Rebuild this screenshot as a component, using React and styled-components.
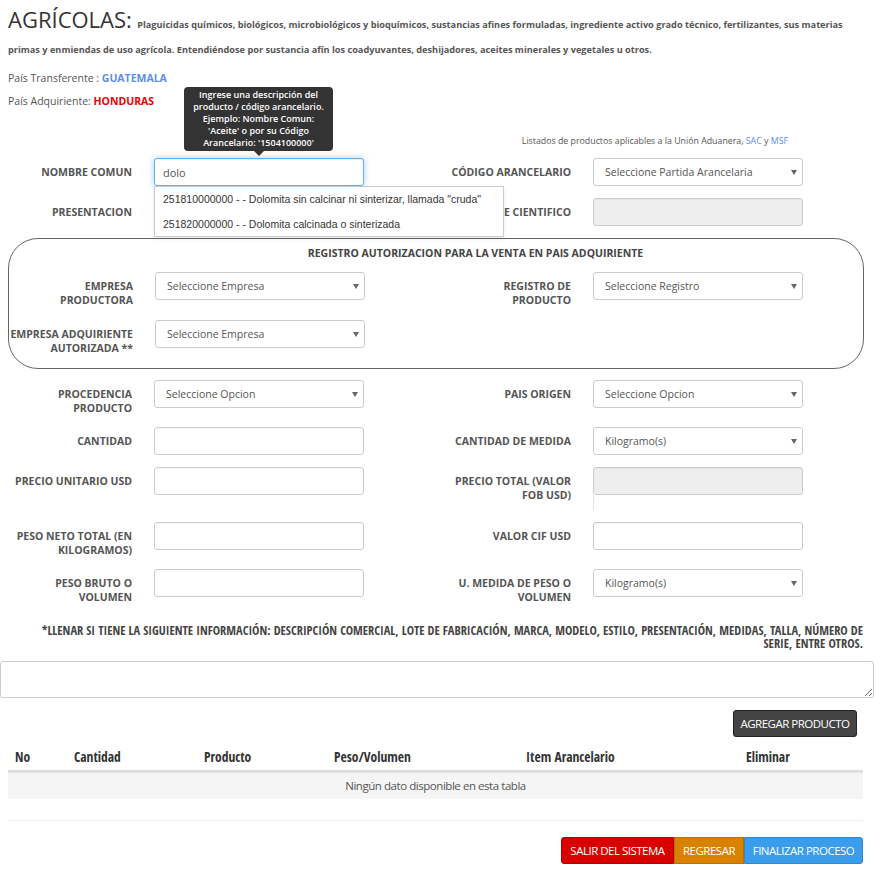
import React from "react";
import styled, { createGlobalStyle } from "styled-components";

const GlobalStyle = createGlobalStyle`
  html, body { margin: 0; padding: 0; background: #fff; }
  body { font-family: "Open Sans", "Liberation Sans", sans-serif; color: #555; }
  *, *::before, *::after { box-sizing: border-box; }
`;

const condensedBold = `
  font-family: "Open Sans Condensed", "Open Sans", sans-serif;
  font-weight: 700;
`;

const narrowRegular = `
  font-family: "Open Sans", "Liberation Sans", sans-serif;
  font-weight: 400;
  letter-spacing: -0.5px;
`;

const Page = styled.div`
  width: 880px;
  padding-bottom: 12px;
`;

const Title = styled.p`
  margin: 0;
  padding: 7px 20px 0 8px;
  font-size: 9.2px;
  font-weight: 700;
  line-height: 25px;
  color: #555;
`;

const BigTitle = styled.span`
  font-size: 22px;
  font-weight: 400;
  color: #333;
  margin-right: 3px;
`;

const Countries = styled.div`
  margin-top: 5px;
  padding-left: 8px;
`;

const CountryLine = styled.p`
  margin: 0;
  font-size: 10.5px;
  line-height: 23px;
  color: #555;
`;

const Country = styled.b`
  color: ${(p) => p.$color};
  font-weight: 700;
`;

const ListNote = styled.p`
  margin: 22px 92px 0 0;
  text-align: right;
  font-size: 8.8px;
  line-height: 13px;
  color: #555;
`;

const Link = styled.a`
  color: #5b8ef0;
  text-decoration: none;
`;

const Form = styled.div`
  margin-top: 10px;
  padding-bottom: 1px;
`;

const Row = styled.div`
  display: grid;
  grid-template-columns: ${(p) => (p.$boxed ? "430px" : "439px")} 1fr;
  margin-bottom: ${(p) => (p.$boxed ? 13 : 12)}px;
  align-items: start;
`;

const Field = styled.div`
  display: grid;
  grid-template-columns: 124px 210px;
  column-gap: 22px;
  padding-left: ${(p) => (p.$inset === undefined ? 8 : p.$inset)}px;
  align-items: start;
`;

const Label = styled.label`
  text-align: right;
  padding-top: 7px;
  font-size: 10.5px;
  font-weight: 700;
  line-height: 14px;
  color: #555;
  white-space: nowrap;
`;

const Control = styled.div`
  position: relative;
`;

const TextInput = styled.input`
  display: block;
  width: 210px;
  height: 28px;
  padding: 0 8px;
  border: 1px solid ${(p) => (p.$focused ? "#66afe9" : "#ccc")};
  border-radius: 3px;
  background: ${(p) => (p.disabled ? "#eee" : "#fff")};
  font-family: "Open Sans", sans-serif;
  font-size: 11px;
  color: #555;
  outline: none;
  box-shadow: ${(p) =>
    p.$focused
      ? "inset 0 1px 1px rgba(0,0,0,.075), 0 0 6px rgba(102,175,233,.6)"
      : "inset 0 1px 1px rgba(0,0,0,.04)"};
`;

const SelectBox = styled.div`
  position: relative;
  width: 210px;
  &::after {
    content: "";
    position: absolute;
    right: 6px;
    top: 12px;
    border-left: 3px solid transparent;
    border-right: 3px solid transparent;
    border-top: 5px solid #666;
    pointer-events: none;
  }
`;

const Select = styled.select`
  display: block;
  width: 210px;
  height: 28px;
  padding: 0 20px 0 11px;
  border: 1px solid #ccc;
  border-radius: 3px;
  background: #fff;
  appearance: none;
  -webkit-appearance: none;
  font-family: "Open Sans", sans-serif;
  font-size: 10.5px;
  color: #555;
  outline: none;
`;

const Spacer = styled.div`
  height: 15px;
  width: 1px;
  background: #f0dde0;
`;

const Tooltip = styled.div`
  position: absolute;
  left: 30px;
  bottom: 35px;
  width: 149px;
  padding: 2px 6px;
  border-radius: 4px;
  background: #333;
  color: #fff;
  font-size: 9px;
  font-weight: 600;
  line-height: 12px;
  text-align: center;
  z-index: 5;
  &::after {
    content: "";
    position: absolute;
    left: 50%;
    bottom: -5px;
    margin-left: -5px;
    border-left: 5px solid transparent;
    border-right: 5px solid transparent;
    border-top: 5px solid #333;
  }
`;

const Suggestions = styled.ul`
  position: absolute;
  left: 0;
  top: 28px;
  width: 350px;
  margin: 0;
  padding: 0;
  list-style: none;
  background: #fff;
  border: 1px solid #ccc;
  box-shadow: 0 2px 4px rgba(0,0,0,.08);
  z-index: 5;
`;

const Suggestion = styled.li`
  padding: 0 8px;
  line-height: 24.5px;
  font-family: "Liberation Sans", Arial, sans-serif;
  font-size: 10.5px;
  color: #333;
  white-space: nowrap;
`;

const Box = styled.fieldset`
  margin: 0 16px 11px 8px;
  padding: 1px 0 0;
  min-width: 0;
  border: 1px solid #666;
  border-radius: 30px;
`;

const BoxTitle = styled.div`
  padding: 6px 0 0 79px;
  margin-bottom: 12px;
  text-align: center;
  font-size: 10.5px;
  font-weight: 700;
  line-height: 14px;
  color: #444;
`;

const Note = styled.p`
  ${condensedBold}
  margin: 7px 17px 0 20px;
  text-align: right;
  font-size: 12.4px;
  line-height: 13px;
  color: #444;
`;

const TextArea = styled.textarea`
  display: block;
  width: 874px;
  height: 37px;
  margin-top: 11px;
  border: 1px solid #ccc;
  border-radius: 3px;
  resize: both;
  font-family: "Open Sans", sans-serif;
`;

const Toolbar = styled.div`
  display: flex;
  justify-content: flex-end;
  padding-right: ${(p) => p.$right}px;
  margin-top: ${(p) => p.$top}px;
`;

const DarkButton = styled.button`
  ${narrowRegular}
  width: 124px;
  height: 27px;
  padding: 0;
  border: 1px solid #222;
  border-radius: 3px;
  background: #444;
  color: #fff;
  font-size: 11.5px;
`;

const Table = styled.table`
  width: 855px;
  margin: 7px 0 0 8px;
  border-collapse: separate;
  border-spacing: 0;
`;

const Th = styled.th`
  ${condensedBold}
  padding: 6px 7px;
  text-align: left;
  font-size: 13.5px;
  line-height: 14px;
  color: #333;
  border-bottom: 2px solid #ddd;
`;

const EmptyCell = styled.td`
  ${narrowRegular}
  padding: 6px 7px;
  text-align: center;
  font-size: 11.5px;
  letter-spacing: -0.45px;
  line-height: 14px;
  color: #555;
  background: #f5f5f5;
  border-top: 1px solid #e4e4e4;
`;

const Rule = styled.hr`
  width: 855px;
  margin: 21px 0 0 8px;
  border: 0;
  border-top: 1px solid #eee;
`;

const ButtonGroup = styled.div`
  display: flex;
`;

const palette = {
  red: ["#d80000", "#b50000"],
  orange: ["#d98200", "#b86e00"],
  blue: ["#3a9ceb", "#2a88d6"],
};

const GroupButton = styled.button`
  ${narrowRegular}
  width: ${(p) => p.$width}px;
  height: 27px;
  padding: 0;
  border: 1px solid ${(p) => palette[p.$tone][1]};
  background: ${(p) => palette[p.$tone][0]};
  color: #fff;
  font-size: 11.5px;
  border-radius: 0;
  &:first-child { border-radius: 3px 0 0 3px; }
  &:last-child { border-radius: 0 3px 3px 0; }
`;

function SelectField({ value }) {
  return (
    <SelectBox>
      <Select defaultValue={value}>
        <option>{value}</option>
      </Select>
    </SelectBox>
  );
}

export default function App() {
  return (
    <Page>
      <GlobalStyle />
      <Title>
        <BigTitle>AGRÍCOLAS:</BigTitle> Plaguicidas químicos, biológicos, microbiológicos y bioquímicos, sustancias afines formuladas, ingrediente activo grado técnico, fertilizantes, sus materias primas y enmiendas de uso agrícola. Entendiéndose por sustancia afín los coadyuvantes, deshijadores, aceites minerales y vegetales u otros.
      </Title>

      <Countries>
        <CountryLine>
          País Transferente : <Country $color="#5b8ef0">GUATEMALA</Country>
        </CountryLine>
        <CountryLine>
          País Adquiriente: <Country $color="#f00000">HONDURAS</Country>
        </CountryLine>
      </Countries>

      <ListNote>
        Listados de productos aplicables a la Unión Aduanera, <Link href="#">SAC</Link> y{" "}
        <Link href="#">MSF</Link>
      </ListNote>

      <Form>
        <Row>
          <Field>
            <Label>NOMBRE COMUN</Label>
            <Control>
              <Tooltip>
                Ingrese una descripción del producto / código arancelario. Ejemplo: Nombre Comun: 'Aceite' o por su Código Arancelario: '1504100000'
              </Tooltip>
              <TextInput $focused defaultValue="dolo" />
              <Suggestions>
                <Suggestion>251810000000 - - Dolomita sin calcinar ni sinterizar, llamada "cruda"</Suggestion>
                <Suggestion>251820000000 - - Dolomita calcinada o sinterizada</Suggestion>
              </Suggestions>
            </Control>
          </Field>
          <Field>
            <Label>CÓDIGO ARANCELARIO</Label>
            <SelectField value="Seleccione Partida Arancelaria" />
          </Field>
        </Row>

        <Row>
          <Field>
            <Label>PRESENTACION</Label>
            <TextInput />
          </Field>
          <Field>
            <Label>NOMBRE CIENTIFICO</Label>
            <TextInput disabled />
          </Field>
        </Row>

        <Box>
          <BoxTitle>REGISTRO AUTORIZACION PARA LA VENTA EN PAIS ADQUIRIENTE</BoxTitle>
          <Row $boxed>
            <Field $inset={0}>
              <Label>
                EMPRESA
                <br />
                PRODUCTORA
              </Label>
              <SelectField value="Seleccione Empresa" />
            </Field>
            <Field>
              <Label>
                REGISTRO DE
                <br />
                PRODUCTO
              </Label>
              <SelectField value="Seleccione Registro" />
            </Field>
          </Row>
          <Row $boxed>
            <Field $inset={0}>
              <Label>
                EMPRESA ADQUIRIENTE
                <br />
                AUTORIZADA **
              </Label>
              <SelectField value="Seleccione Empresa" />
            </Field>
          </Row>
        </Box>

        <Row>
          <Field>
            <Label>
              PROCEDENCIA
              <br />
              PRODUCTO
            </Label>
            <SelectField value="Seleccione Opcion" />
          </Field>
          <Field>
            <Label>PAIS ORIGEN</Label>
            <SelectField value="Seleccione Opcion" />
          </Field>
        </Row>

        <Row>
          <Field>
            <Label>CANTIDAD</Label>
            <TextInput />
          </Field>
          <Field>
            <Label>CANTIDAD DE MEDIDA</Label>
            <SelectField value="Kilogramo(s)" />
          </Field>
        </Row>

        <Row>
          <Field>
            <Label>PRECIO UNITARIO USD</Label>
            <TextInput />
          </Field>
          <Field>
            <Label>
              PRECIO TOTAL (VALOR
              <br />
              FOB USD)
            </Label>
            <div>
              <TextInput disabled />
              <Spacer />
            </div>
          </Field>
        </Row>

        <Row>
          <Field>
            <Label>
              PESO NETO TOTAL (EN
              <br />
              KILOGRAMOS)
            </Label>
            <TextInput />
          </Field>
          <Field>
            <Label>VALOR CIF USD</Label>
            <TextInput />
          </Field>
        </Row>

        <Row>
          <Field>
            <Label>
              PESO BRUTO O
              <br />
              VOLUMEN
            </Label>
            <TextInput />
          </Field>
          <Field>
            <Label>
              U. MEDIDA DE PESO O
              <br />
              VOLUMEN
            </Label>
            <SelectField value="Kilogramo(s)" />
          </Field>
        </Row>
      </Form>

      <Note>
        *LLENAR SI TIENE LA SIGUIENTE INFORMACIÓN: DESCRIPCIÓN COMERCIAL, LOTE DE FABRICACIÓN, MARCA, MODELO, ESTILO, PRESENTACIÓN, MEDIDAS, TALLA, NÚMERO DE SERIE, ENTRE OTROS.
      </Note>
      <TextArea />

      <Toolbar $right={23} $top={12}>
        <DarkButton>AGREGAR PRODUCTO</DarkButton>
      </Toolbar>

      <Table>
        <colgroup>
          <col style={{ width: 59 }} />
          <col style={{ width: 130 }} />
          <col style={{ width: 130 }} />
          <col style={{ width: 192 }} />
          <col style={{ width: 220 }} />
          <col />
        </colgroup>
        <thead>
          <tr>
            <Th>No</Th>
            <Th>Cantidad</Th>
            <Th>Producto</Th>
            <Th>Peso/Volumen</Th>
            <Th>Item Arancelario</Th>
            <Th>Eliminar</Th>
          </tr>
        </thead>
        <tbody>
          <tr>
            <EmptyCell colSpan={6}>Ningún dato disponible en esta tabla</EmptyCell>
          </tr>
        </tbody>
      </Table>

      <Rule />

      <Toolbar $right={17} $top={16}>
        <ButtonGroup>
          <GroupButton $tone="red" $width={113}>SALIR DEL SISTEMA</GroupButton>
          <GroupButton $tone="orange" $width={70}>REGRESAR</GroupButton>
          <GroupButton $tone="blue" $width={119}>FINALIZAR PROCESO</GroupButton>
        </ButtonGroup>
      </Toolbar>
    </Page>
  );
}
